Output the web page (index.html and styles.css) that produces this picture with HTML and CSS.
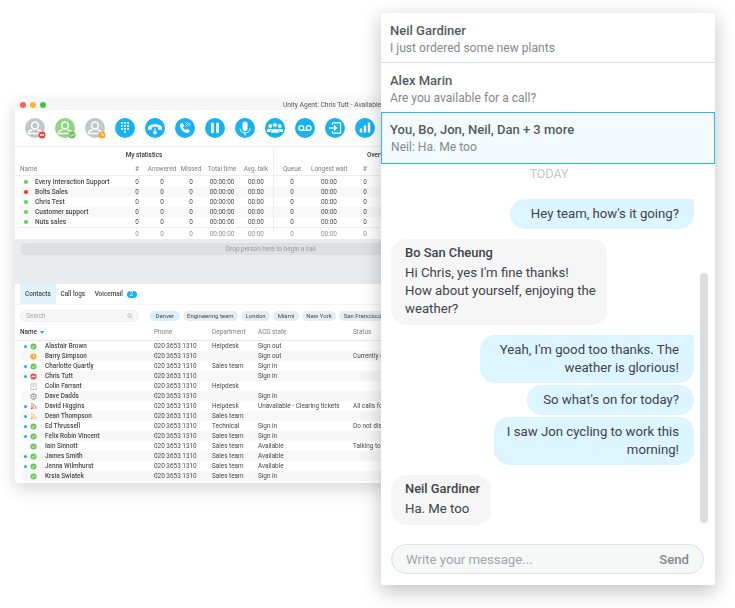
FILE: index.html
```html
<!DOCTYPE html>
<html lang="en">
<head>
<meta charset="utf-8">
<title>Unity Agent</title>
<link rel="stylesheet" href="styles.css">
</head>
<body>
<div class="canvas">
  <section class="agent">
    <header class="titlebar">
      <span class="light red"></span><span class="light amber"></span><span class="light green"></span>
      <span class="title">Unity Agent: Chris Tutt - Available</span>
    </header>
    <div class="toolbar">
      <svg class="tool" viewBox="0 0 20 20"><circle cx="10" cy="10" r="10" fill="#c3c7c9"/><circle cx="10" cy="7.500" r="3.400" fill="none" stroke="#fff" stroke-width="1.500"/><path d="M3.500 15.500v-1c0-1.500 2-2 4-2.800M16.500 15.500v-1c0-1.500-2-2-4-2.800M3.500 15.500h13" fill="none" stroke="#fff" stroke-width="1.500"/><circle cx="17" cy="17" r="3.500" fill="#f04438"/><rect x="15" y="16.300" width="4" height="1.400" fill="#fff"/></svg>
      <svg class="tool" viewBox="0 0 20 20"><circle cx="10" cy="10" r="10" fill="#8ed67f"/><circle cx="10" cy="7.500" r="3.400" fill="none" stroke="#fff" stroke-width="1.500"/><path d="M3.500 15.500v-1c0-1.500 2-2 4-2.800M16.500 15.500v-1c0-1.500-2-2-4-2.800M3.500 15.500h13" fill="none" stroke="#fff" stroke-width="1.500"/><circle cx="17" cy="17" r="3.500" fill="#6cc65a"/><path d="M15.300 17l1.200 1.200 2.200-2.300" fill="none" stroke="#fff" stroke-width="1"/></svg>
      <svg class="tool" viewBox="0 0 20 20"><circle cx="10" cy="10" r="10" fill="#c3c7c9"/><circle cx="10" cy="7.500" r="3.400" fill="none" stroke="#fff" stroke-width="1.500"/><path d="M3.500 15.500v-1c0-1.500 2-2 4-2.800M16.500 15.500v-1c0-1.500-2-2-4-2.800M3.500 15.500h13" fill="none" stroke="#fff" stroke-width="1.500"/><circle cx="17" cy="17" r="3.500" fill="#f8a92c"/><path d="M17 15v2.200h1.600" fill="none" stroke="#fff" stroke-width=".9"/></svg>
      <svg class="tool" viewBox="0 0 20 20"><circle cx="10" cy="10" r="10" fill="#16b2f4"/><g fill="#fff"><rect x="6" y="4" width="1.800" height="1.800"/><rect x="9.100" y="4" width="1.800" height="1.800"/><rect x="12.200" y="4" width="1.800" height="1.800"/><rect x="6" y="7" width="1.800" height="1.800"/><rect x="9.100" y="7" width="1.800" height="1.800"/><rect x="12.200" y="7" width="1.800" height="1.800"/><rect x="6" y="10" width="1.800" height="1.800"/><rect x="9.100" y="10" width="1.800" height="1.800"/><rect x="12.200" y="10" width="1.800" height="1.800"/><rect x="9.100" y="13" width="1.800" height="1.800"/></g></svg>
      <svg class="tool" viewBox="0 0 20 20"><circle cx="10" cy="10" r="10" fill="#16b2f4"/><path d="M3 10c0-5 14-5 14 0v1.800h-3.800V9.400c-2-.8-4.400-.8-6.400 0v2.400H3z" fill="#fff"/><path d="M10 10.500v5M8.200 14l1.800 1.800 1.800-1.800" fill="none" stroke="#fff" stroke-width="1.200"/></svg>
      <svg class="tool" viewBox="0 0 20 20"><circle cx="10" cy="10" r="10" fill="#16b2f4"/><path d="M5 6.500l2.300-1.700 2 3-1.300 1.300c.5 1.400 1.500 2.500 2.800 3l1.300-1.300 3 2-1.700 2.300C9 15.500 4.500 10.500 5 6.500z" fill="#fff"/><path d="M10.500 4.500l2 2-2 2M13 4.500l2 2-2 2" fill="none" stroke="#fff" stroke-width=".9"/></svg>
      <svg class="tool" viewBox="0 0 20 20"><circle cx="10" cy="10" r="10" fill="#16b2f4"/><rect x="6" y="4.500" width="2.800" height="11" rx="1.400" fill="#fff"/><rect x="11.200" y="4.500" width="2.800" height="11" rx="1.400" fill="#fff"/></svg>
      <svg class="tool" viewBox="0 0 20 20"><circle cx="10" cy="10" r="10" fill="#16b2f4"/><rect x="7.500" y="3.500" width="5" height="9.500" rx="2.500" fill="#fff"/><path d="M5 10.500c0 6 10 6 10 0M10 14.500v3" fill="none" stroke="#fff" stroke-width="1"/></svg>
      <svg class="tool" viewBox="0 0 20 20"><circle cx="10" cy="10" r="10" fill="#16b2f4"/><g fill="#fff"><circle cx="5.200" cy="8" r="1.900"/><circle cx="14.800" cy="8" r="1.900"/><path d="M2 14v-1.500c0-1 1.500-1.800 3.200-1.800s3 .8 3 1.800V14zM11.800 14v-1.500c0-1 1.300-1.800 3-1.800s3.200.8 3.200 1.800V14z"/></g><circle cx="10" cy="7" r="2.300" fill="#fff" stroke="#16b2f4" stroke-width=".6"/><path d="M6 15v-2c0-1.300 1.800-2.300 4-2.300s4 1 4 2.300v2z" fill="#fff" stroke="#16b2f4" stroke-width=".6"/></svg>
      <svg class="tool" viewBox="0 0 20 20"><circle cx="10" cy="10" r="10" fill="#16b2f4"/><circle cx="6.300" cy="10" r="2.400" fill="none" stroke="#fff" stroke-width="1.300"/><circle cx="13.700" cy="10" r="2.400" fill="none" stroke="#fff" stroke-width="1.300"/><path d="M6.300 12.400h7.400" stroke="#fff" stroke-width="1.300"/></svg>
      <svg class="tool" viewBox="0 0 20 20"><circle cx="10" cy="10" r="10" fill="#16b2f4"/><path d="M7.500 7V4.800h8v10.400h-8V13" fill="none" stroke="#fff" stroke-width="1.300"/><path d="M4 10h7.500M9 7.500l2.500 2.500L9 12.500" fill="none" stroke="#fff" stroke-width="1.300"/></svg>
      <svg class="tool" viewBox="0 0 20 20"><circle cx="10" cy="10" r="10" fill="#16b2f4"/><g fill="#fff"><rect x="4.800" y="10.500" width="2.400" height="4" rx=".6"/><rect x="8.800" y="7.500" width="2.400" height="7" rx=".6"/><rect x="12.800" y="4.500" width="2.400" height="10" rx=".6"/></g></svg>
    </div>

    <div class="stats">
      <div class="stats-groups"><span class="group mine">My statistics</span><span class="group overview">Overview</span></div>
      <div class="stats-row stats-head"><span class="name">Name</span><span>#</span><span>Answered</span><span>Missed</span><span>Total time</span><span>Avg. talk</span><span>Queue</span><span>Longest wait</span><span>#</span></div>
      <div class="stats-body">
        <div class="stats-row"><span class="name"><i class="dot ok"></i>Every Interaction Support</span><span>0</span><span>0</span><span>0</span><span>00:00:00</span><span>00:00</span><span>0</span><span>00:00</span><span>0</span></div>
        <div class="stats-row"><span class="name"><i class="dot bad"></i>Bolts Sales</span><span>0</span><span>0</span><span>0</span><span>00:00:00</span><span>00:00</span><span>0</span><span>00:00</span><span>0</span></div>
        <div class="stats-row"><span class="name"><i class="dot ok"></i>Chris Test</span><span>0</span><span>0</span><span>0</span><span>00:00:00</span><span>00:00</span><span>0</span><span>00:00</span><span>0</span></div>
        <div class="stats-row"><span class="name"><i class="dot ok"></i>Customer support</span><span>0</span><span>0</span><span>0</span><span>00:00:00</span><span>00:00</span><span>0</span><span>00:00</span><span>0</span></div>
        <div class="stats-row"><span class="name"><i class="dot ok"></i>Nuts sales</span><span>0</span><span>0</span><span>0</span><span>00:00:00</span><span>00:00</span><span>0</span><span>00:00</span><span>0</span></div>
      </div>
      <div class="stats-row stats-total"><span class="name"></span><span>0</span><span>0</span><span>0</span><span>00:00:00</span><span>00:00</span><span>0</span><span>00:00</span><span>0</span></div>
    </div>

    <div class="dropzone"><div class="drop-pill">Drop person here to begin a call</div></div>

    <nav class="tabs">
      <span class="tab active">Contacts</span><span class="tab">Call logs</span><span class="tab">Voicemail <b class="count">2</b></span>
    </nav>
    <div class="filters">
      <div class="search"><span>Search</span><svg class="search-icon" viewBox="0 0 8 8"><circle cx="3.300" cy="3.300" r="2.300" fill="none" stroke="#aaa"/><path d="M5 5l2.300 2.300" stroke="#aaa"/></svg></div>
      <span class="chip on">Denver</span><span class="chip">Engineering team</span><span class="chip">London</span><span class="chip">Miami</span><span class="chip">New York</span><span class="chip">San Francisco</span>
    </div>
    <div class="c-row c-head"><span></span><span class="c-name strong">Name <i class="caret"></i></span><span>Phone</span><span>Department</span><span>ACD state</span><span>Status</span></div>
    <div class="c-body">
      <div class="c-row"><span class="c-mark"><i class="live"></i><svg class="st" viewBox="0 0 8 8"><circle cx="4" cy="4" r="3.500" fill="#6cc65a"/><path d="M2.300 4l1.200 1.200 2.200-2.300" fill="none" stroke="#fff" stroke-width=".9"/></svg></span><span class="c-name">Alastair Brown</span><span>020 3653 1310</span><span>Helpdesk</span><span>Sign out</span><span></span></div>
      <div class="c-row"><span class="c-mark"><svg class="st" viewBox="0 0 8 8"><circle cx="4" cy="4" r="3.500" fill="#f8a92c"/><path d="M4 2v2.200h1.700" fill="none" stroke="#fff" stroke-width=".9"/></svg></span><span class="c-name">Barry Simpson</span><span>020 3653 1310</span><span></span><span>Sign out</span><span>Currently on a break</span></div>
      <div class="c-row"><span class="c-mark"><i class="live"></i><svg class="st" viewBox="0 0 8 8"><circle cx="4" cy="4" r="3.500" fill="#6cc65a"/><path d="M2.300 4l1.200 1.200 2.200-2.300" fill="none" stroke="#fff" stroke-width=".9"/></svg></span><span class="c-name">Charlotte Quartly</span><span>020 3653 1310</span><span>Sales team</span><span>Sign in</span><span></span></div>
      <div class="c-row"><span class="c-mark"><i class="live"></i><svg class="st" viewBox="0 0 8 8"><circle cx="4" cy="4" r="3.500" fill="#f04438"/><rect x="1.800" y="3.200" width="4.400" height="1.600" rx=".4" fill="#fff"/></svg></span><span class="c-name">Chris Tutt</span><span>020 3653 1310</span><span></span><span>Sign in</span><span></span></div>
      <div class="c-row"><span class="c-mark"><svg class="st" viewBox="0 0 8 8"><rect x="1" y="1" width="6" height="6.500" fill="none" stroke="#bbb"/><circle cx="4" cy="3.500" r="1.100" fill="#bbb"/></svg></span><span class="c-name">Colin Farrant</span><span>020 3653 1310</span><span>Helpdesk</span><span></span><span></span></div>
      <div class="c-row"><span class="c-mark"><svg class="st" viewBox="0 0 8 8"><circle cx="4" cy="4" r="3" fill="none" stroke="#999" stroke-width="1.200"/><circle cx="4" cy="4" r="1.200" fill="#999"/></svg></span><span class="c-name">Dave Dadds</span><span>020 3653 1310</span><span></span><span>Sign in</span><span></span></div>
      <div class="c-row"><span class="c-mark"><i class="live"></i><svg class="st" viewBox="0 0 8 8"><circle cx="2" cy="6" r="1" fill="#f04438"/><path d="M1 3.500a3.500 3.500 0 0 1 3.500 3.500M1 1a6 6 0 0 1 6 6" fill="none" stroke="#f04438" stroke-width=".9"/></svg></span><span class="c-name">David Higgins</span><span>020 3653 1310</span><span>Helpdesk</span><span>Unavailable - Clearing tickets</span><span>All calls forwarded</span></div>
      <div class="c-row"><span class="c-mark"><i class="live"></i><svg class="st" viewBox="0 0 8 8"><circle cx="2" cy="6" r="1" fill="#f8a92c"/><path d="M1 3.500a3.500 3.500 0 0 1 3.500 3.500M1 1a6 6 0 0 1 6 6" fill="none" stroke="#f8a92c" stroke-width=".9"/></svg></span><span class="c-name">Dean Thompson</span><span>020 3653 1310</span><span>Sales team</span><span></span><span></span></div>
      <div class="c-row"><span class="c-mark"><i class="live"></i><svg class="st" viewBox="0 0 8 8"><circle cx="4" cy="4" r="3.500" fill="#6cc65a"/><path d="M2.300 4l1.200 1.200 2.200-2.300" fill="none" stroke="#fff" stroke-width=".9"/></svg></span><span class="c-name">Ed Thrussell</span><span>020 3653 1310</span><span>Technical</span><span>Sign in</span><span>Do not disturb</span></div>
      <div class="c-row"><span class="c-mark"><i class="live"></i><svg class="st" viewBox="0 0 8 8"><circle cx="4" cy="4" r="3.500" fill="#6cc65a"/><path d="M2.300 4l1.200 1.200 2.200-2.300" fill="none" stroke="#fff" stroke-width=".9"/></svg></span><span class="c-name">Felix Robin Vincent</span><span>020 3653 1310</span><span>Sales team</span><span>Sign in</span><span></span></div>
      <div class="c-row"><span class="c-mark"><svg class="st" viewBox="0 0 8 8"><circle cx="4" cy="4" r="3.500" fill="#6cc65a"/><path d="M2.300 4l1.200 1.200 2.200-2.300" fill="none" stroke="#fff" stroke-width=".9"/></svg></span><span class="c-name">Iain Sinnott</span><span>020 3653 1310</span><span>Sales team</span><span>Available</span><span>Talking to customer</span></div>
      <div class="c-row"><span class="c-mark"><i class="live"></i><svg class="st" viewBox="0 0 8 8"><circle cx="4" cy="4" r="3.500" fill="#6cc65a"/><path d="M2.300 4l1.200 1.200 2.200-2.300" fill="none" stroke="#fff" stroke-width=".9"/></svg></span><span class="c-name">James Smith</span><span>020 3653 1310</span><span>Sales team</span><span>Available</span><span></span></div>
      <div class="c-row"><span class="c-mark"><i class="live"></i><svg class="st" viewBox="0 0 8 8"><circle cx="4" cy="4" r="3.500" fill="#6cc65a"/><path d="M2.300 4l1.200 1.200 2.200-2.300" fill="none" stroke="#fff" stroke-width=".9"/></svg></span><span class="c-name">Jenna Wilmhurst</span><span>020 3653 1310</span><span>Sales team</span><span>Available</span><span></span></div>
      <div class="c-row"><span class="c-mark"><svg class="st" viewBox="0 0 8 8"><circle cx="4" cy="4" r="3.500" fill="#6cc65a"/><path d="M2.300 4l1.200 1.200 2.200-2.300" fill="none" stroke="#fff" stroke-width=".9"/></svg></span><span class="c-name">Krsia Swiatek</span><span>020 3653 1310</span><span>Sales team</span><span>Sign in</span><span></span></div>
    </div>
  </section>

  <section class="chat">
    <div class="convo"><div class="who">Neil Gardiner</div><div class="preview">I just ordered some new plants</div></div>
    <div class="convo"><div class="who">Alex Marin</div><div class="preview">Are you available for a call?</div></div>
    <div class="convo selected"><div class="who">You, Bo, Jon, Neil, Dan + 3 more</div><div class="preview">Neil: Ha. Me too</div></div>
    <div class="today">TODAY</div>
    <div class="thread">
      <div class="bubble mine hey">Hey team, how's it going?</div>
      <div class="bubble theirs gap"><div class="sender">Bo San Cheung</div>Hi Chris, yes I'm fine thanks!<br>How about yourself, enjoying the weather?</div>
      <div class="bubble mine gap wide">Yeah, I'm good too thanks. The weather is glorious!</div>
      <div class="bubble mine near round today-q">So what's on for today?</div>
      <div class="bubble mine near round cycling">I saw Jon cycling to work this morning!</div>
      <div class="bubble theirs gap"><div class="sender">Neil Gardiner</div>Ha. Me too</div>
    </div>
    <div class="composer"><span class="placeholder">Write your message...</span><span class="send">Send</span></div>
    <div class="scrollbar"></div>
  </section>
</div>
</body>
</html>
```
FILE: styles.css
```css
* { box-sizing: border-box; }
html, body { margin: 0; background: #fff; overflow: hidden; }
.canvas { position: relative; width: 735px; height: 608px; overflow: hidden; font-family: Roboto, "Liberation Sans", sans-serif; }

/* back window */
.agent { position: absolute; left: 15px; top: 100px; width: 634px; height: 383px; background: #fff; border-radius: 3px; box-shadow: 0 6px 18px rgba(0,0,0,.16); font-size: 6.400px; color: #484848; overflow: hidden; filter: blur(.22px); white-space: nowrap; }
.titlebar { height: 10px; background: #f6f6f6; display: flex; align-items: center; padding-left: 4.600px; gap: 4px; position: relative; }
.light { width: 6px; height: 6px; border-radius: 50%; }
.light.red { background: #f4605a; }
.light.amber { background: #f8b72c; }
.light.green { background: #3fc24a; }
.title { position: absolute; left: 0; right: 0; text-align: center; font-size: 6.700px; color: #555; }
.toolbar { height: 37px; display: flex; align-items: center; padding-left: 10px; gap: 10px; border-bottom: 1px solid #eee; }
.tool { width: 20px; height: 20px; flex: none; overflow: visible; }

.stats-groups { height: 16px; display: flex; position: relative; }
.group { font-weight: 500; color: #333; line-height: 17px; }
.group.mine { width: 258px; text-align: center; }
.group.overview { padding-left: 94px; }
.stats { position: relative; height: 92px; }
.stats::after { content: ""; position: absolute; left: 258px; top: 0; bottom: 6px; width: 1px; background: #eee; }
.stats-row { display: grid; grid-template-columns: 107px 20px 30px 28px 34px 34px 38px 36px 36px; margin-left: 5px; height: 10px; line-height: 10px; text-align: center; border-radius: 5px 0 0 5px; }
.stats-row .name { text-align: left; padding-left: 15px; display: flex; align-items: center; color: #484848; font-weight: 500; font-size: 6.600px; }
.stats-head { height: 13px; line-height: 13px; color: #808080; margin-left: 0; padding-left: 5px; border-bottom: 1px solid #eee; border-radius: 0; }
.stats-head .name { padding-left: 0; color: #808080; font-weight: 400; font-size: 6.400px; }
.stats-body { padding-top: 1px; }
.stats-body .stats-row:nth-child(even) { background: #f8f8f8; }
.dot { width: 3.500px; height: 3.500px; border-radius: 50%; margin-left: -11px; margin-right: 7.500px; flex: none; }
.dot.ok { background: #6bd15b; }
.dot.bad { background: #f5422f; }
.stats-total { margin-left: 0; padding-left: 5px; height: 12px; line-height: 12px; color: #909090; border-top: 1px solid #eee; }

.dropzone { height: 45px; background: #e9ecee; padding: 4px 5px; }
.drop-pill { height: 12px; width: 500px; border-radius: 6px; background: #dde0e3; line-height: 12px; padding-left: 206px; color: #999; }

.tabs { height: 21px; display: flex; padding-left: 5px; border-bottom: 1px solid #f6f6f6; }
.tab { padding: 0 5px 0 4.500px; line-height: 21px; color: #484848; font-weight: 500; }
.tab.active { background: #dff3fc; width: 36px; padding-left: 5px; }
.count { display: inline-block; background: #16b2f4; color: #fff; border-radius: 3.500px; width: 10px; height: 7px; line-height: 7px; text-align: center; font-weight: 400; margin-left: 2px; }
.filters { height: 22px; display: flex; align-items: center; padding-left: 5px; gap: 3px; }
.search { width: 119px; height: 12px; margin-right: 8px; border-radius: 6px; background: #f6f6f6; border: 1px solid #eee; display: flex; justify-content: space-between; align-items: center; padding: 0 5px; color: #aaa; flex: none; }
.search-icon { width: 6px; height: 6px; }
.chip { height: 10px; line-height: 10px; border-radius: 5px; background: #e9ecee; padding: 0 4.500px; color: #484848; flex: none; font-size: 6px; }
.chip.on { background: #d7f0fc; padding: 0 5.500px; }

.c-row { display: grid; grid-template-columns: 25px 109px 58px 46px 95px 200px; margin-left: 5px; height: 10px; line-height: 10px; border-radius: 5px 0 0 5px; }
.c-head { margin-left: 0; padding-left: 5px; height: 14px; line-height: 10px; color: #808080; border-bottom: 1px solid #e8e8e8; border-radius: 0; grid-template-columns: 0 134px 58px 46px 95px 200px; }
.c-name { font-weight: 500; }
.strong { color: #3a3a3a; }
.caret { display: inline-block; border: 2.500px solid transparent; border-top: 3px solid #16b2f4; border-bottom: 0; margin-left: 1px; vertical-align: middle; }
.c-body .c-row:nth-child(even) { background: #f7f7f7; }
.c-mark { position: relative; display: block; height: 10px; }
.live { position: absolute; left: 4px; top: 3.500px; width: 3px; height: 3px; border-radius: 50%; background: #16b2f4; }
.st { position: absolute; left: 10px; top: 1.500px; width: 7px; height: 7px; }

/* chat */
.chat { position: absolute; left: 381px; top: 13px; width: 334px; height: 572px; background: #fff; border-radius: 2px; box-shadow: 0 6px 20px rgba(0,0,0,.25); display: flex; flex-direction: column; }
.convo { height: 50px; padding: 9px 9px 0; border-bottom: 1px solid #d9dbdc; }
.convo.selected { height: 52px; margin-top: -1px; padding: 8px 8px 0; background: #f4fbff; border: 1px solid #1ebcf2; }
.who { font-size: 13px; line-height: 17px; font-weight: 500; color: #555a5e; }
.preview { font-size: 12.100px; line-height: 17px; margin-top: 1px; color: #85898c; }
.selected .preview { padding-left: 1px; }
.today { text-align: center; color: #c4c6c8; font-size: 12.400px; line-height: 14px; margin-top: 3px; padding-left: 2px; }
.thread { display: flex; flex-direction: column; padding: 18px 21px 0 10px; font-size: 13.200px; line-height: 18px; color: #3f4448; }
.bubble { padding: 6px 15px; border-radius: 15px; width: max-content; }
.bubble.mine { align-self: flex-end; background: #dcf5ff; border-top-right-radius: 0; text-align: right; }
.bubble.round { border-top-right-radius: 15px; }
.bubble.hey { padding-left: 21px; }
.bubble.today-q { padding-left: 16px; }
.bubble.theirs { background: #f6f6f6; align-self: flex-start; max-width: 216px; padding: 5px 11px 7px 14px; }
.bubble.wide { width: 214px; padding-left: 13px; }
.bubble.cycling { width: 200px; padding-left: 10px; }
.bubble.near { margin-top: 2px; }
.bubble.gap { margin-top: 10px; }
.sender { font-weight: 500; font-size: 12.900px; line-height: 17px; margin-bottom: 3px; color: #3f4448; }
.composer { position: absolute; left: 10px; top: 531px; width: 313px; height: 30px; border-radius: 15px; background: #f6f7f7; border: 1px solid #dfe2e3; display: flex; justify-content: space-between; align-items: center; padding: 0 14px; font-size: 13.200px; }
.placeholder { color: #a2a5a8; }
.send { color: #85898c; font-weight: 500; }
.scrollbar { position: absolute; left: 319px; top: 260px; width: 8px; height: 250px; border-radius: 4px; background: #d9dde0; }
```
